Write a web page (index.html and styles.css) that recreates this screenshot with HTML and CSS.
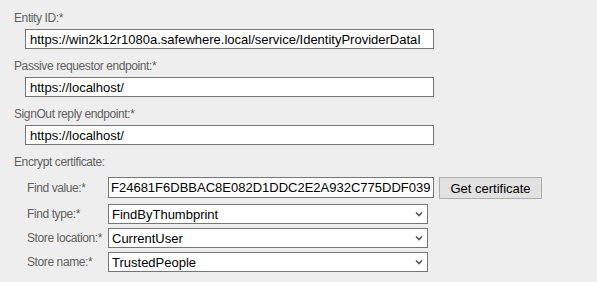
FILE: index.html
```html
<!DOCTYPE html>
<html lang="en">
<head>
    <meta charset="UTF-8">
    <title>Identity provider</title>
    <link rel="stylesheet" href="styles.css">
</head>
<body>
    <div class="form">
        <div class="field">
            <label class="field-label">Entity ID:*</label>
            <input class="text-input" type="text" value="https://win2k12r1080a.safewhere.local/service/IdentityProviderDataI">
        </div>
        <div class="field">
            <label class="field-label">Passive requestor endpoint:*</label>
            <input class="text-input" type="text" value="https://localhost/">
        </div>
        <div class="field">
            <label class="field-label">SignOut reply endpoint:*</label>
            <input class="text-input" type="text" value="https://localhost/">
        </div>

        <div class="group">
            <div class="field-label">Encrypt certificate:</div>
            <div class="cert-rows">
                <div class="cert-row first">
                    <label class="row-label">Find value:*</label>
                    <input class="text-input value-input" type="text" value="F24681F6DBBAC8E082D1DDC2E2A932C775DDF039">
                    <button class="get-button">Get certificate</button>
                </div>
                <div class="cert-row">
                    <label class="row-label">Find type:*</label>
                    <select class="select-input">
                        <option>FindByThumbprint</option>
                    </select>
                </div>
                <div class="cert-row">
                    <label class="row-label">Store location:*</label>
                    <select class="select-input">
                        <option>CurrentUser</option>
                    </select>
                </div>
                <div class="cert-row">
                    <label class="row-label">Store name:*</label>
                    <select class="select-input">
                        <option>TrustedPeople</option>
                    </select>
                </div>
            </div>
        </div>
    </div>
</body>
</html>
```

FILE: styles.css
```css
body {
    margin: 0;
    padding: 10px 14px;
    background-color: #EEEEEE;
    font-family: "Liberation Sans", Arial, sans-serif;
}

.field {
    margin-bottom: 9px;
}

.field-label {
    display: block;
    font-size: 12px;
    line-height: 16px;
    letter-spacing: -0.4px;
    color: #5F5F5F;
    white-space: nowrap;
    margin-bottom: 3px;
}

.text-input {
    display: block;
    box-sizing: border-box;
    width: 409px;
    height: 20px;
    margin: 0 0 0 11px;
    padding: 0 4px;
    border: 1px solid #767676;
    background-color: #FFFFFF;
    font-family: "Liberation Sans", Arial, sans-serif;
    font-size: 13px;
    color: #000000;
    outline: none;
}

.group .field-label {
    margin-bottom: 7px;
}

.cert-rows {
    padding-left: 13px;
}

.cert-row {
    display: flex;
    align-items: center;
    height: 20px;
    margin-bottom: 4px;
}

.cert-row.first {
    height: 22px;
    margin-bottom: 5px;
}

.row-label {
    flex: none;
    width: 81px;
    font-size: 12px;
    letter-spacing: -0.4px;
    color: #5F5F5F;
    white-space: nowrap;
}

.value-input {
    width: 326px;
    height: 21px;
    margin: 0;
    padding: 0 2px;
    align-self: flex-start;
}

.get-button {
    box-sizing: border-box;
    width: 103px;
    height: 22px;
    margin-left: 5px;
    padding: 0;
    align-self: flex-start;
    border: 1px solid #ADADAD;
    background-color: #E1E1E1;
    font-family: "Liberation Sans", Arial, sans-serif;
    font-size: 13px;
    color: #000000;
}

.select-input {
    box-sizing: border-box;
    width: 320px;
    height: 20px;
    padding: 0 3px;
    border: 1px solid #767676;
    border-radius: 0;
    background-color: #FFFFFF;
    background-image: url("data:image/svg+xml,%3Csvg xmlns='http://www.w3.org/2000/svg' width='8' height='6' viewBox='0 0 8 6'%3E%3Cpath d='M1 1.5 L4 4.5 L7 1.5' fill='none' stroke='%23555555' stroke-width='1.6'/%3E%3C/svg%3E");
    background-repeat: no-repeat;
    background-position: right 4px center;
    -webkit-appearance: none;
    appearance: none;
    font-family: "Liberation Sans", Arial, sans-serif;
    font-size: 13px;
    color: #000000;
    outline: none;
}
```
